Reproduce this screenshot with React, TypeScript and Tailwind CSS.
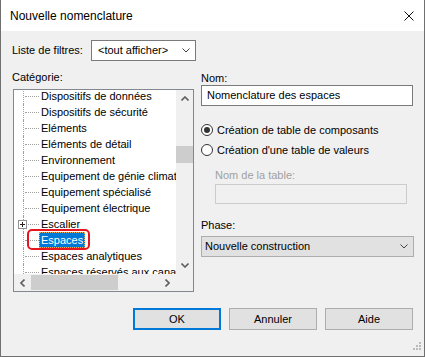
import React from "react";

const categories = [
  "Dispositifs de données",
  "Dispositifs de sécurité",
  "Eléments",
  "Eléments de détail",
  "Environnement",
  "Equipement de génie climatique",
  "Equipement spécialisé",
  "Equipement électrique",
  "Escalier",
  "Espaces",
  "Espaces analytiques",
  "Espaces réservés aux canalisations",
];

const Chevron = ({ dir, thin }: { dir: "up" | "down" | "left" | "right"; thin?: boolean }) => {
  const pts = {
    up: "0.5,4.5 4,1 7.5,4.5",
    down: "0.5,0.5 4,4 7.5,0.5",
    left: "4.5,0.5 1,4 4.5,7.5",
    right: "0.5,0.5 4,4 0.5,7.5",
  }[dir];
  const vertical = dir === "up" || dir === "down";
  return (
    <svg width={vertical ? 8 : 5} height={vertical ? 5 : 8} viewBox={vertical ? "0 0 8 5" : "0 0 5 8"}>
      <polyline
        points={pts}
        fill="none"
        stroke={thin ? "#444" : "#606060"}
        strokeWidth={thin ? 1 : 1.6}
      />
    </svg>
  );
};

const TreeRow = ({ label }: { label: string }) => {
  const selected = label === "Espaces";
  const expandable = label === "Escalier";
  return (
    <div className="relative flex h-[16px] shrink-0">
      <div className="w-[9px] shrink-0" />
      <div className="flex w-[16px] shrink-0 items-center border-l border-dotted border-[#a0a0a0]">
        <div className="ml-[1px] w-[14px] border-t border-dotted border-[#a0a0a0]" />
      </div>
      <span
        className={
          selected
            ? "flex h-[16px] items-center whitespace-nowrap border border-dotted border-[#e8b060] bg-[#0078d7] px-[1px] text-white"
            : "flex h-[16px] items-center whitespace-nowrap px-[2px]"
        }
      >
        {label}
      </span>
      {expandable && (
        <div className="absolute left-[4px] top-[4px] flex h-[9px] w-[9px] items-center justify-center border border-[#919191] bg-white">
          <svg width="5" height="5" viewBox="0 0 5 5">
            <path d="M0 2.5H5M2.5 0V5" stroke="#222" strokeWidth="1" />
          </svg>
        </div>
      )}
      {selected && (
        <div className="absolute left-[13px] top-[-3px] h-[21px] w-[63px] rounded-[5px] border-2 border-[#e8141e]" />
      )}
    </div>
  );
};

export default function App() {
  return (
    <div className="flex h-[357px] w-[425px] flex-col border-x border-b border-[#707070] bg-[#f0f0f0] font-['Liberation_Sans',Arial,sans-serif] text-[11px] text-black">
      {/* title bar */}
      <div className="flex h-[31px] shrink-0 items-center justify-between bg-white pl-[9px] pr-[10px] text-[12px]">
        <span>Nouvelle nomenclature</span>
        <svg width="10" height="10" viewBox="0 0 10 10">
          <path d="M0.5 0.5L9.5 9.5M9.5 0.5L0.5 9.5" stroke="#111" strokeWidth="1" />
        </svg>
      </div>

      <div className="flex flex-1 flex-col px-[11px]">
        {/* filter */}
        <div className="mt-[9px] flex h-[21px] items-center">
          <span className="w-[79px]">Liste de filtres:</span>
          <div className="flex h-[21px] w-[105px] items-center justify-between border border-[#7a7a7a] bg-white pl-[6px] pr-[5px]">
            <span>&lt;tout afficher&gt;</span>
            <Chevron dir="down" thin />
          </div>
        </div>

        <div className="mt-[9px] flex">
          {/* category tree */}
          <div className="flex w-[182px] shrink-0 flex-col">
            <div className="h-[14px] leading-[14px]">Catégorie:</div>
            <div className="ml-[1px] mt-[5px] flex h-[203px] w-[181px] flex-col border border-[#828790] bg-white">
              <div className="flex min-h-0 flex-1">
                <div className="flex min-w-0 flex-1 flex-col overflow-hidden">
                  <div className="mt-[-2px] flex flex-col">
                    {categories.map((c) => (
                      <TreeRow key={c} label={c} />
                    ))}
                  </div>
                </div>
                <div className="flex w-[17px] shrink-0 flex-col bg-[#f0f0f0]">
                  <div className="flex h-[17px] items-center justify-center">
                    <Chevron dir="up" />
                  </div>
                  <div className="flex-1">
                    <div className="mt-[39px] h-[17px] bg-[#cdcdcd]" />
                  </div>
                  <div className="flex h-[17px] items-center justify-center">
                    <Chevron dir="down" />
                  </div>
                </div>
              </div>
              <div className="flex h-[17px] shrink-0 bg-[#f0f0f0]">
                <div className="flex w-[17px] items-center justify-center">
                  <Chevron dir="left" />
                </div>
                <div className="flex-1">
                  <div className="mt-[1px] h-[15px] w-[87px] bg-[#cdcdcd]" />
                </div>
                <div className="flex w-[17px] items-center justify-center">
                  <Chevron dir="right" />
                </div>
                <div className="w-[17px]" />
              </div>
            </div>
          </div>

          {/* right side */}
          <div className="ml-[7px] flex w-[213px] shrink-0 flex-col">
            <div className="h-[15px] pt-[2px] leading-[13px]">Nom:</div>
            <div className="flex h-[21px] w-[212px] items-center border border-[#7a7a7a] bg-white pl-[5px]">
              Nomenclature des espaces
            </div>

            <div className="mt-[16px] flex h-[16px] items-center">
              <div className="flex h-[12px] w-[12px] items-center justify-center rounded-full border border-[#333] bg-white">
                <div className="h-[6px] w-[6px] rounded-full bg-[#333]" />
              </div>
              <span className="ml-[4px]">Création de table de composants</span>
            </div>
            <div className="mt-[4px] flex h-[16px] items-center">
              <div className="h-[12px] w-[12px] rounded-full border border-[#333] bg-white" />
              <span className="ml-[4px]">Création d'une table de valeurs</span>
            </div>

            <div className="mt-[10px] h-[14px] pl-[14px] leading-[14px] text-[#a0a0a0]">Nom de la table:</div>
            <div className="ml-[14px] mt-[2px] h-[20px] w-[192px] border border-[#cccccc] bg-[#f0f0f0]" />

            <div className="mt-[14px] h-[14px] leading-[14px]">Phase:</div>
            <div className="mt-[4px] flex h-[21px] w-[213px] items-center justify-between border border-[#adadad] bg-[#e1e1e1] pl-[3px] pr-[5px]">
              <span>Nouvelle construction</span>
              <Chevron dir="down" thin />
            </div>
          </div>
        </div>

        {/* buttons */}
        <div className="mt-[16px] flex justify-end gap-[8px]">
          <button className="flex h-[22px] w-[88px] items-center justify-center border-2 border-[#0078d7] bg-[#e1e1e1]">
            OK
          </button>
          <button className="flex h-[22px] w-[88px] items-center justify-center border border-[#adadad] bg-[#e1e1e1]">
            Annuler
          </button>
          <button className="flex h-[22px] w-[88px] items-center justify-center border border-[#adadad] bg-[#e1e1e1]">
            Aide
          </button>
        </div>

        <div className="mr-[-8px] mt-[12px] self-end">
          <svg width="8" height="8" viewBox="0 0 8 8">
            <rect x="6" y="0" width="2" height="2" fill="#bcbcbc" />
            <rect x="6" y="3" width="2" height="2" fill="#bcbcbc" />
            <rect x="3" y="3" width="2" height="2" fill="#bcbcbc" />
            <rect x="6" y="6" width="2" height="2" fill="#bcbcbc" />
            <rect x="3" y="6" width="2" height="2" fill="#bcbcbc" />
            <rect x="0" y="6" width="2" height="2" fill="#bcbcbc" />
          </svg>
        </div>
      </div>
    </div>
  );
}
